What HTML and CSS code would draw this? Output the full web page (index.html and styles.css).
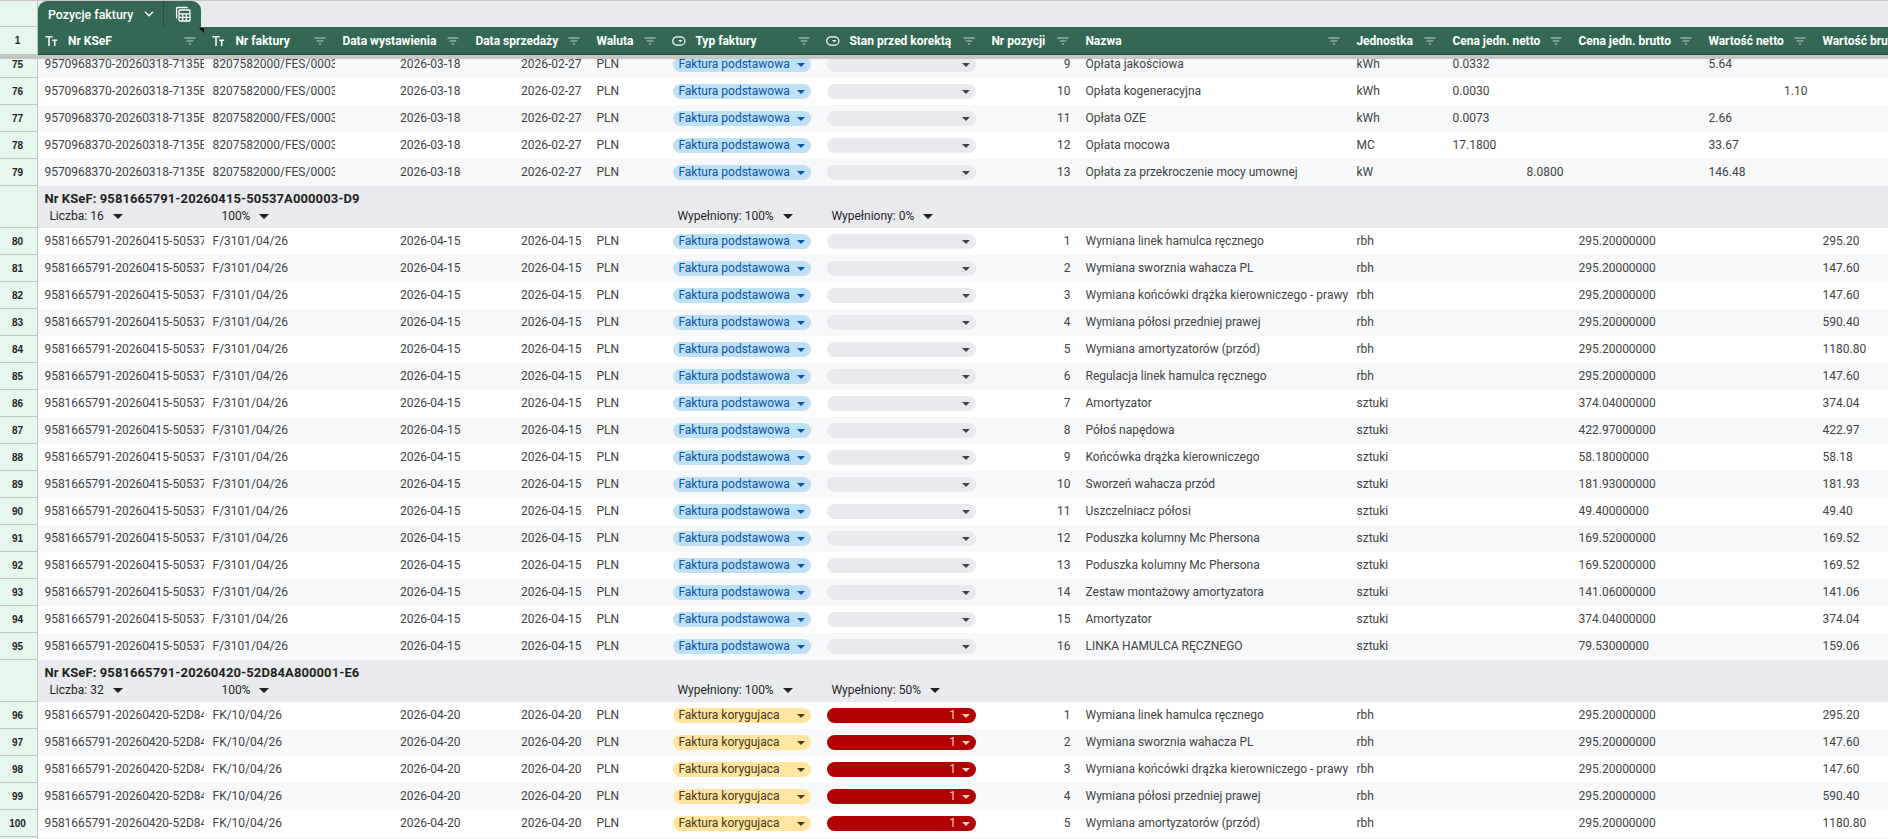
FILE: index.html
```
<!DOCTYPE html>
<html lang="pl">
<head>
    <meta charset="UTF-8">
    <meta name="viewport" content="width=device-width, initial-scale=1.0">
    <title>Pozycje faktury</title>
    <link rel="stylesheet" href="styles.css">
</head>
<body>
    <div class="sheet">
        <div class="topbar">
            <div class="gutter gutter-top"></div>
            <div class="table-tab">
                <div class="tab-name">
                    <span>Pozycje faktury</span>
                    <svg class="chevron" width="10" height="6" viewBox="0 0 10 6"><path d="M1 .8l4 4 4-4" fill="none" stroke="currentColor" stroke-width="1.4"/></svg>
                </div>
                <div class="tab-tools">
                    <svg width="16" height="16" viewBox="0 0 16 16" fill="none" stroke="currentColor" stroke-width="1.3">
                        <path d="M1.6 12.6V2.4q0-.9.9-.9h10.2"/>
                        <rect x="4" y="4" width="11" height="11" rx="1"/>
                        <path d="M4 7.8h11M4 11.4h11M7.7 7.8V15M11.3 7.8V15"/>
                    </svg>
                </div>
            </div>
        </div>
        <div class="row header" id="header"></div>
        <div class="freeze-bar"></div>
        <div class="viewport">
            <div class="rows" id="rows"></div>
        </div>
    </div>

    <script>
        const columns = [
            { name: 'Nr KSeF', icon: 'text', note: true },
            { name: 'Nr faktury', icon: 'text' },
            { name: 'Data wystawienia' },
            { name: 'Data sprzedaży' },
            { name: 'Waluta' },
            { name: 'Typ faktury', icon: 'chip' },
            { name: 'Stan przed korektą', icon: 'chip' },
            { name: 'Nr pozycji' },
            { name: 'Nazwa' },
            { name: 'Jednostka' },
            { name: 'Cena jedn. netto' },
            { name: 'Cena jedn. brutto' },
            { name: 'Wartość netto' },
            { name: 'Wartość brutto' }
        ];

        const icons = {
            text: '<svg class="type-icon" width="13" height="12" viewBox="0 0 13 12" fill="none" stroke="currentColor" stroke-width="1.5"><path d="M0 1.8h7M3.5 1.8V11M6.7 5.2h5M9.2 5.2V11"/></svg>',
            chip: '<svg class="type-icon" width="14" height="10" viewBox="0 0 14 10"><rect x=".7" y=".9" width="12.2" height="8.2" rx="4.1" fill="none" stroke="currentColor" stroke-width="1.2"/><path d="M6 4h4.4L8.2 6.3z" fill="currentColor"/></svg>',
            filter: '<svg class="filter-icon" width="12" height="8" viewBox="0 0 12 8"><path d="M.5 1h11M2.7 4h6.6M4.9 7h2.2" fill="none" stroke="currentColor" stroke-width="1.1"/></svg>'
        };

        // pozycja, nazwa, jednostka, cena netto, cena brutto, wartość netto, wartość brutto
        const repair = [
            [1, 'Wymiana linek hamulca ręcznego', 'rbh', '', '295.20000000', '', '295.20'],
            [2, 'Wymiana sworznia wahacza PL', 'rbh', '', '295.20000000', '', '147.60'],
            [3, 'Wymiana końcówki drążka kierowniczego - prawy', 'rbh', '', '295.20000000', '', '147.60'],
            [4, 'Wymiana półosi przedniej prawej', 'rbh', '', '295.20000000', '', '590.40'],
            [5, 'Wymiana amortyzatorów (przód)', 'rbh', '', '295.20000000', '', '1180.80']
        ];

        const groups = [
            {
                start: 75, ksef: '9570968370-20260318-7135E', nr: '8207582000/FES/0003',
                issued: '2026-03-18', sold: '2026-02-27', type: 'podstawowa',
                items: [
                    [9, 'Opłata jakościowa', 'kWh', '0.0332', '', '5.64', ''],
                    [10, 'Opłata kogeneracyjna', 'kWh', '0.0030', '', { num: '1.10' }, ''],
                    [11, 'Opłata OZE', 'kWh', '0.0073', '', '2.66', ''],
                    [12, 'Opłata mocowa', 'MC', '17.1800', '', '33.67', ''],
                    [13, 'Opłata za przekroczenie mocy umownej', 'kW', { num: '8.0800' }, '', '146.48', '']
                ]
            },
            {
                start: 80, title: true, count: 16, filled: '0%',
                ksef: '9581665791-20260415-50537A000003-D9', nr: 'F/3101/04/26',
                issued: '2026-04-15', sold: '2026-04-15', type: 'podstawowa',
                items: repair.concat([
                    [6, 'Regulacja linek hamulca ręcznego', 'rbh', '', '295.20000000', '', '147.60'],
                    [7, 'Amortyzator', 'sztuki', '', '374.04000000', '', '374.04'],
                    [8, 'Półoś napędowa', 'sztuki', '', '422.97000000', '', '422.97'],
                    [9, 'Końcówka drążka kierowniczego', 'sztuki', '', '58.18000000', '', '58.18'],
                    [10, 'Sworzeń wahacza przód', 'sztuki', '', '181.93000000', '', '181.93'],
                    [11, 'Uszczelniacz półosi', 'sztuki', '', '49.40000000', '', '49.40'],
                    [12, 'Poduszka kolumny Mc Phersona', 'sztuki', '', '169.52000000', '', '169.52'],
                    [13, 'Poduszka kolumny Mc Phersona', 'sztuki', '', '169.52000000', '', '169.52'],
                    [14, 'Zestaw montażowy amortyzatora', 'sztuki', '', '141.06000000', '', '141.06'],
                    [15, 'Amortyzator', 'sztuki', '', '374.04000000', '', '374.04'],
                    [16, 'LINKA HAMULCA RĘCZNEGO', 'sztuki', '', '79.53000000', '', '159.06']
                ])
            },
            {
                start: 96, title: true, count: 32, filled: '50%',
                ksef: '9581665791-20260420-52D84A800001-E6', nr: 'FK/10/04/26',
                issued: '2026-04-20', sold: '2026-04-20', type: 'korygujaca', before: '1',
                items: repair
            }
        ];

        function cell(value, cls) {
            if (value.num) {
                return `<div class="cell right">${value.num}</div>`;
            }
            return `<div class="cell ${cls || ''}">${value}</div>`;
        }

        function chip(text, cls) {
            return `<div class="cell chip-cell"><div class="chip ${cls}"><span>${text}</span><i class="arrow"></i></div></div>`;
        }

        function summary(text) {
            return `<div class="summary">${text}<i class="arrow"></i></div>`;
        }

        function renderRow(group, item, index) {
            const [pos, name, unit, ...amounts] = item;
            // the first block is scrolled, its banding starts on the dark stripe
            const odd = (index + (group.title ? 0 : 1)) % 2;
            return `<div class="row${odd ? ' odd' : ''}">
                <div class="gutter">${group.start + index}</div>`
                + cell(group.ksef.slice(0, 25), 'ksef') + cell(group.nr, 'nr')
                + cell(group.issued, 'right') + cell(group.sold, 'right') + cell('PLN')
                + chip('Faktura ' + group.type, group.type)
                + chip(group.before || '', group.before ? 'before' : 'empty')
                + cell(pos, 'right') + cell(name) + cell(unit)
                + amounts.map(a => cell(a)).join('')
                + '</div>';
        }

        function renderTitle(group) {
            return `<div class="group">
                <div class="gutter"></div>
                <div class="group-body">
                    <div class="group-title">Nr KSeF: ${group.ksef}</div>
                    <div class="summaries">
                        ${summary('Liczba: ' + group.count)}${summary('100%')}
                        <span></span><span></span><span></span>
                        ${summary('Wypełniony: 100%')}${summary('Wypełniony: ' + group.filled)}
                    </div>
                </div>
            </div>`;
        }

        document.getElementById('header').innerHTML = '<div class="gutter">1</div>' + columns.map(c =>
            `<div class="head ${c.note ? 'note' : ''}">${c.icon ? icons[c.icon] : ''}<span class="label">${c.name}</span>${icons.filter}</div>`
        ).join('');

        document.getElementById('rows').innerHTML = groups.map(g =>
            (g.title ? renderTitle(g) : '') + g.items.map((item, i) => renderRow(g, item, i)).join('')
        ).join('') + '<div class="row odd"><div class="gutter"></div></div>';
    </script>
</body>
</html>
```
FILE: styles.css
```
body {
    margin: 0;
    overflow: hidden;
    background: #fff;
    font-family: Roboto, Arial, sans-serif;
    font-size: 12px;
    color: #434343;
}
.sheet {
    height: 839px;
    width: 100%;
    overflow: hidden;
    display: flex;
    flex-direction: column;
    --cols: 38px 167px 130px 133px 121px 76px 154px 165px 94px 271px 96px 126px 130px 114px 140px;
}
.topbar {
    display: flex;
    height: 27px;
    flex: none;
    box-sizing: border-box;
    background: #e8eaed;
    border-top: 1px solid #c7c7c7;
}
.gutter {
    width: 38px;
    box-sizing: border-box;
    display: flex;
    align-items: center;
    justify-content: center;
    padding-right: 2px;
    background: #e6f8ed;
    border-right: 1px solid #bfc5c1;
    border-bottom: 1px solid #bfc5c1;
    font-family: "Liberation Sans", Arial, sans-serif;
    font-size: 10px;
    font-weight: bold;
    color: #1f1f1f;
}
.table-tab {
    display: flex;
    width: 163px;
    background: #356854;
    color: #fff;
    border-radius: 9px 9px 0 0;
}
.tab-name {
    display: flex;
    align-items: center;
    width: 126px;
    box-sizing: border-box;
    padding-left: 10px;
    gap: 10px;
    border-right: 1px solid #28503f;
    font-size: 12.4px;
    font-weight: 500;
    white-space: nowrap;
}
.tab-name span {
    width: 86px;
}
.tab-tools {
    flex: 1;
    display: flex;
    align-items: center;
    justify-content: center;
}
.row {
    display: grid;
    grid-template-columns: var(--cols);
    height: 27px;
    flex: none;
    background: #fff;
}
.odd {
    background: #f6f8f9;
}
.header {
    height: 28px;
    background: #356854;
    color: #fff;
    font-weight: bold;
}
.head {
    display: flex;
    align-items: center;
    box-sizing: border-box;
    padding: 0 9px 0 7.4px;
    border-bottom: 1px solid #284f3f;
    white-space: nowrap;
    overflow: hidden;
    position: relative;
}
.head .label {
    flex: 1;
}
.type-icon {
    width: 14px;
    margin-right: 9px;
}
.head.note {
    padding-left: 7px;
}
.filter-icon {
    color: #c4d5cd;
}
.note::after {
    content: "";
    position: absolute;
    top: 1px;
    right: 1px;
    border-top: 5px solid #000;
    border-left: 5px solid transparent;
}
.freeze-bar {
    height: 4px;
    flex: none;
    background: #c4c6c4;
}
/* the first row is scrolled partly under the frozen header */
.viewport {
    flex: 1;
    overflow: hidden;
}
.rows {
    margin-top: -8px;
}
.cell {
    padding: 0 7px 0 7.5px;
    line-height: 26px;
    white-space: nowrap;
    overflow: hidden;
}
.ksef {
    padding: 0 0 0 6.4px;
    margin-right: 1px;
}
.nr {
    padding-right: 0;
}
.right {
    text-align: right;
    padding-right: 7.5px;
}
.chip-cell {
    display: flex;
    align-items: center;
    padding: 0 8px;
}
.chip {
    display: flex;
    flex: 1;
    align-items: center;
    justify-content: space-between;
    height: 15px;
    padding: 0 6px 0 5.4px;
    border-radius: 8px;
    line-height: 15px;
}
.arrow {
    border: 4px solid transparent;
    border-top-color: currentColor;
    border-bottom: 0;
}
.podstawowa {
    background: #bfe1f6;
    color: #0a53a8;
}
.korygujaca {
    background: #ffe5a0;
    color: #473821;
}
.empty {
    background: #e8eaed;
    color: #434343;
}
.before {
    background: #b10202;
    color: #ffcfc9;
    justify-content: flex-end;
    gap: 6px;
}
.group {
    display: grid;
    grid-template-columns: 38px 1fr;
    height: 42px;
    background: #e8eaed;
    color: #1f1f1f;
}
.group-body {
    padding-top: 4px;
}
.group-title {
    padding-left: 6.4px;
    font-size: 13px;
    font-weight: bold;
    letter-spacing: 0.1px;
    line-height: 18px;
}
.summaries {
    display: grid;
    grid-template-columns: 171px 126px 133px 121px 76px 154px 165px;
    line-height: 17px;
}
.summary {
    display: flex;
    align-items: center;
    gap: 9px;
    padding-left: 12.4px;
}
.summary:first-child {
    padding-left: 11.4px;
}
.summary .arrow {
    border-width: 5px 5px 0;
}
```
